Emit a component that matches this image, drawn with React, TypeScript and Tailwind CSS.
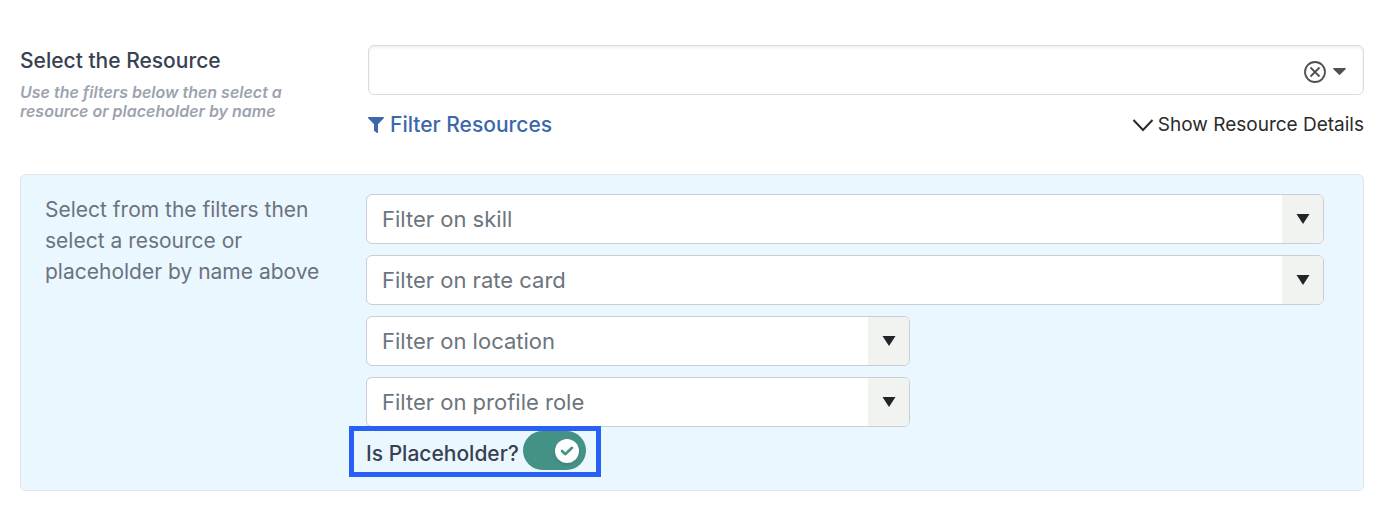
import React, { useState } from 'react';

type FilterSelectProps = {
  id: string;
  label: string;
  className?: string;
};

const FilterSelect: React.FC<FilterSelectProps> = ({ id, label, className = 'w-full' }) => {
  return (
    <div className={`grid ${className}`}>
      <select
        id={id}
        aria-label={label}
        defaultValue=""
        className="col-start-1 row-start-1 h-[50px] w-full appearance-none rounded-md border border-[#c9ced4] bg-white pl-[15px] pr-12 text-[22px] text-[#6c757d]"
      >
        <option value="">{label}</option>
      </select>
      <span className="pointer-events-none col-start-1 row-start-1 my-px mr-px flex w-[41px] items-center justify-center justify-self-end rounded-r-[5px] bg-[#f1f3f0]">
        <svg width="14" height="10" viewBox="0 0 14 10" fill="#212529" aria-hidden="true">
          <path d="M0.5 0h13L7 10z" />
        </svg>
      </span>
    </div>
  );
};

const ResourcePicker: React.FC = () => {
  const [resource, setResource] = useState('');

  return (
    <div className="flex h-[50px] items-center rounded-md border border-[#d6dbe6] bg-white pr-[17px] shadow-[inset_0_2px_3px_rgba(0,0,0,0.06)]">
      <input
        id="resource"
        type="text"
        value={resource}
        onChange={(e) => setResource(e.target.value)}
        className="h-full min-w-0 flex-1 bg-transparent px-4 text-[21px] text-[#374151] outline-none"
      />
      <button type="button" aria-label="Clear" className="mt-1" onClick={() => setResource('')}>
        <svg width="24" height="24" viewBox="0 0 24 24" fill="none" stroke="#505050" strokeWidth="1.8" aria-hidden="true">
          <circle cx="12" cy="12" r="10" />
          <path d="M7.5 7.5l9 9M16.5 7.5l-9 9" />
        </svg>
      </button>
      <button type="button" aria-label="Open list" className="ml-1.5 mt-0.5">
        <svg width="13" height="7" viewBox="0 0 13 7" fill="#505050" aria-hidden="true">
          <path d="M1 0h11c.8 0 1.1.7.6 1.2L7.2 6.5c-.4.5-1 .5-1.4 0L.4 1.2C-.1.7.2 0 1 0z" />
        </svg>
      </button>
    </div>
  );
};

const App: React.FC = () => {
  const [isPlaceholder, setIsPlaceholder] = useState(true);

  return (
    <main className="bg-white px-5 pb-4 pt-[45px] font-['Inter',sans-serif] text-[#374151]">
      <section className="flex">
        <div className="w-[348px] shrink-0">
          <label htmlFor="resource" className="block text-[21px] leading-8 font-medium">
            Select the Resource
          </label>
          <p className="mt-1.5 w-[290px] text-base leading-[19px] font-semibold italic text-[#9ca3af]">
            Use the filters below then select a resource or placeholder by name
          </p>
        </div>
        <div className="min-w-0 flex-1">
          <ResourcePicker />
          <div className="mt-[15px] flex items-center justify-between">
            <a href="#filters" className="flex items-center gap-1.5 text-[21px] leading-[30px] font-medium text-[#3b68ab]">
              <svg width="16" height="16" viewBox="0 0 16 16" fill="currentColor" aria-hidden="true">
                <path d="M.7 0h14.6c.7 0 .9.8.5 1.3L10 7.2v8.2c0 .5-.5.8-1 .5l-2.6-2c-.3-.2-.4-.4-.4-.7v-6L.2 1.3C-.3.8 0 0 .7 0z" />
              </svg>
              Filter Resources
            </a>
            <button type="button" className="flex items-center gap-1 text-[19px] leading-[30px] text-[#2b2b2b]">
              <svg width="22" height="14" viewBox="0 0 22 14" fill="none" stroke="currentColor" strokeWidth="2" aria-hidden="true">
                <path d="M1.5 2L11 12l9.5-10" />
              </svg>
              Show Resource Details
            </button>
          </div>
        </div>
      </section>

      <section id="filters" className="mt-[34px] flex rounded-md border border-[#dfe4ea] bg-[#ebf7fe] pb-[13px] pl-6 pr-[39px] pt-[19px]">
        <p className="w-[321px] shrink-0 pr-10 text-[21px] leading-[31px] text-[#6b7280]">
          Select from the filters then select a resource or placeholder by name above
        </p>
        <div className="flex min-w-0 flex-1 flex-col">
          <div className="flex flex-col gap-[11px]">
            <FilterSelect id="skill" label="Filter on skill" />
            <FilterSelect id="rate-card" label="Filter on rate card" />
            <FilterSelect id="location" label="Filter on location" className="w-[544px] max-w-full" />
            <FilterSelect id="profile-role" label="Filter on profile role" className="w-[544px] max-w-full" />
          </div>
          <div className="-ml-[17px] -mt-px flex h-[51px] items-start gap-1 self-start border-[5px] border-[#2860f5] pl-3 pr-2.5">
            <label htmlFor="is-placeholder" className="pt-2 text-[21px] leading-[30px] font-medium">
              Is Placeholder?
            </label>
            <label className="grid h-[39px] w-[63px] cursor-pointer items-center">
              <input
                id="is-placeholder"
                type="checkbox"
                role="switch"
                checked={isPlaceholder}
                onChange={() => setIsPlaceholder(!isPlaceholder)}
                className="col-start-1 row-start-1 h-full w-full cursor-pointer appearance-none rounded-full bg-gray-300 checked:bg-[#439285]"
              />
              <span
                className={`pointer-events-none z-10 col-start-1 row-start-1 mx-[7px] flex h-6 w-6 items-center justify-center rounded-full bg-white shadow-sm ${
                  isPlaceholder ? 'justify-self-end' : 'justify-self-start'
                }`}
              >
                {isPlaceholder && (
                  <svg width="14" height="12" viewBox="0 0 14 12" fill="none" stroke="#439285" strokeWidth="2.6" strokeLinecap="round" strokeLinejoin="round" aria-hidden="true">
                    <path d="M2 6L5.2 9.2 12 2.8" />
                  </svg>
                )}
              </span>
            </label>
          </div>
        </div>
      </section>
    </main>
  );
};

export default App;
